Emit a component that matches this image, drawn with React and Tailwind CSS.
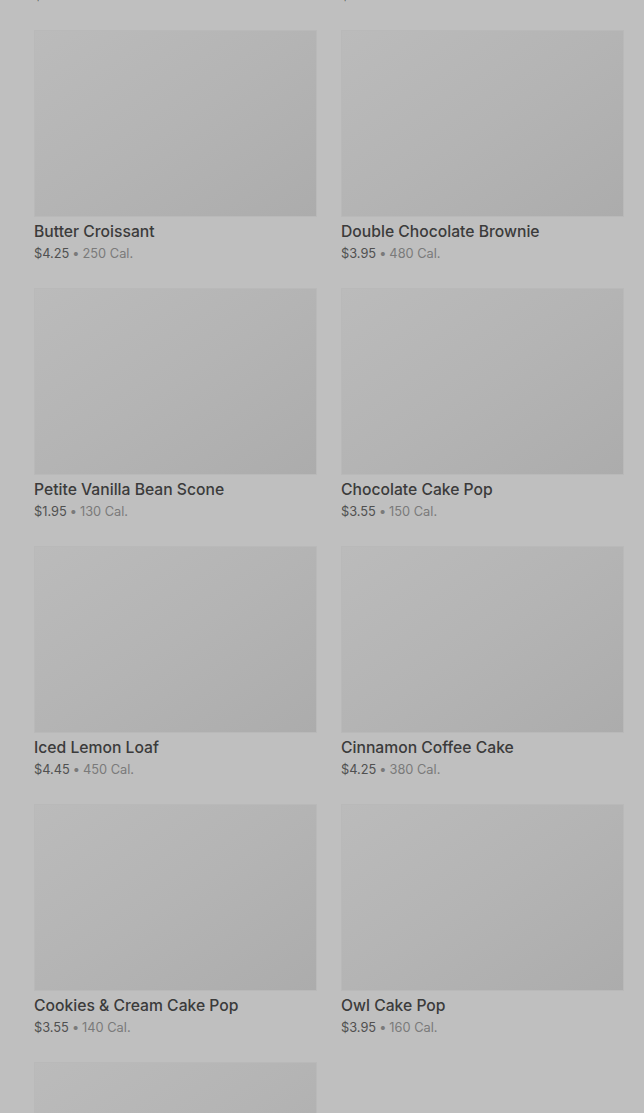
import React from "react";

const items = [
  { name: "Chocolate Chip Cookie", price: "$3.25", cal: "260 Cal." },
  { name: "Blueberry Muffin", price: "$4.45", cal: "430 Cal." },
  { name: "Butter Croissant", price: "$4.25", cal: "250 Cal." },
  { name: "Double Chocolate Brownie", price: "$3.95", cal: "480 Cal." },
  { name: "Petite Vanilla Bean Scone", price: "$1.95", cal: "130 Cal." },
  { name: "Chocolate Cake Pop", price: "$3.55", cal: "150 Cal." },
  { name: "Iced Lemon Loaf", price: "$4.45", cal: "450 Cal." },
  { name: "Cinnamon Coffee Cake", price: "$4.25", cal: "380 Cal." },
  { name: "Cookies & Cream Cake Pop", price: "$3.55", cal: "140 Cal." },
  { name: "Owl Cake Pop", price: "$3.95", cal: "160 Cal." },
  { name: "Birthday Cake Pop", price: "$3.55", cal: "160 Cal." },
];

function Card({ item }) {
  return (
    <div className="flex flex-col">
      <div className="h-[187px] w-full bg-linear-to-br from-[#bbbbbb] via-[#b4b4b4] to-[#acacac] border border-[#b9b9b9]" />
      <div className="mt-[3px] text-[15.7px] leading-6 font-medium text-[#3b3b3b]">
        {item.name}
      </div>
      <div className="text-[12.8px] leading-5 text-[#7a7a7a]">
        <span className="text-[#505050]">{item.price}</span>
        <span className="mx-[3px]">•</span>
        {item.cal}
      </div>
    </div>
  );
}

export default function App() {
  return (
    <div
      className="w-[644px] h-[1113px] overflow-hidden bg-[#bfbfbf]"
      style={{ fontFamily: "Inter, 'Open Sans', sans-serif" }}
    >
      <div className="mt-[-228px] pl-[34px] pr-[20px] grid grid-cols-2 gap-x-[24px] gap-y-[24px]">
        {items.map((it, i) => (
          <Card key={i} item={it} />
        ))}
      </div>
    </div>
  );
}
